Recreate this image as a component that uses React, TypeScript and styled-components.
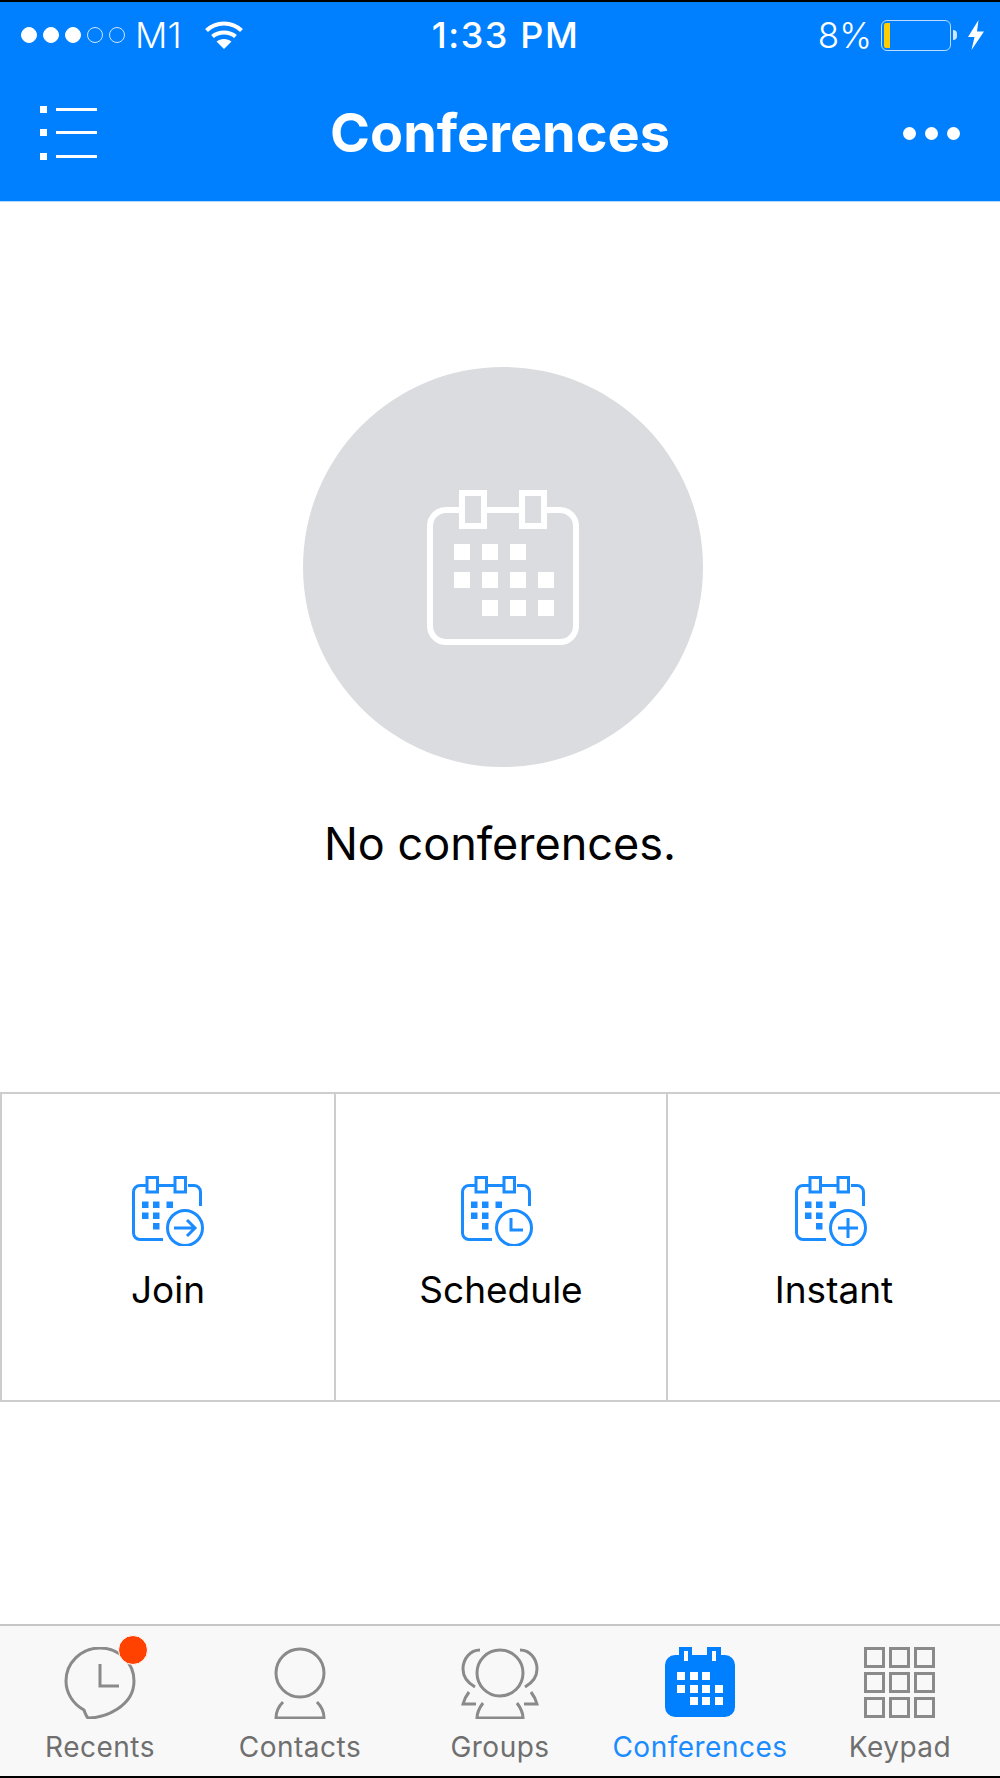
import styled, { createGlobalStyle } from 'styled-components';

const BLUE = '#0080ff';
const ICON_BLUE = '#1a8cff';
const GRAY = '#8a8a8a';

const GlobalStyle = createGlobalStyle`
  html, body { margin: 0; padding: 0; background: #fff; }
  * { box-sizing: border-box; }
  body { font-family: Inter, "Liberation Sans", sans-serif; }
`;

const Page = styled.div`
  width: 1000px;
  height: 1778px;
  display: flex;
  flex-direction: column;
  background: #fff;
  border-top: 2px solid #000;
  border-bottom: 2px solid #000;
`;

const TopBar = styled.header`
  height: 199px;
  flex: none;
  background: ${BLUE};
  color: #fff;
  display: flex;
  flex-direction: column;
  box-shadow: 0 1px 0 #b3d9ff;
`;

const StatusBar = styled.div`
  height: 66px;
  padding: 0 16px 0 21px;
  display: grid;
  grid-template-columns: 1fr auto 1fr;
  align-items: center;
`;

const StatusLeft = styled.div`
  display: flex;
  align-items: center;
`;

const StatusRight = styled.div`
  display: flex;
  align-items: center;
  justify-content: flex-end;
`;

const SignalDots = styled.div`
  display: flex;
  gap: 6px;
`;

const SignalDot = styled.span<{ $on?: boolean }>`
  width: 16px;
  height: 16px;
  border-radius: 50%;
  border: 1px solid ${(p) => (p.$on ? '#fff' : '#cfe6ff')};
  background: ${(p) => (p.$on ? '#fff' : 'transparent')};
`;

const StatusText = styled.span`
  font-size: 35px;
  font-weight: 300;
  line-height: 40px;
`;

const Carrier = styled(StatusText)`
  margin: 0 23px 0 10px;
  font-size: 36px;
`;

const Clock = styled.span`
  margin-left: 6px;
  font-size: 36px;
  font-weight: 500;
  line-height: 40px;
  letter-spacing: 1.6px;
`;

const Battery = styled.div`
  width: 70px;
  height: 31px;
  margin-left: 9px;
  padding: 2px;
  border: 1.5px solid #bcdcff;
  border-radius: 6px;
`;

const BatteryFill = styled.div`
  width: 6px;
  height: 100%;
  background: #ffcc00;
  border-radius: 2px 0 0 2px;
`;

const BatteryNub = styled.div`
  width: 4px;
  height: 10px;
  margin: 0 11px 0 2px;
  background: #cfe6ff;
  border-radius: 0 5px 5px 0;
`;

const NavBar = styled.div`
  flex: 1;
  padding: 0 40px 3px;
  display: grid;
  grid-template-columns: 1fr auto 1fr;
  align-items: center;
`;

const Title = styled.h1`
  margin: 0;
  font-size: 54px;
  font-weight: 700;
  line-height: 60px;
`;

const MoreDots = styled.div`
  justify-self: end;
  display: flex;
  gap: 9px;
`;

const MoreDot = styled.span`
  width: 13px;
  height: 13px;
  border-radius: 50%;
  background: #fff;
`;

const Main = styled.main`
  height: 891px;
  flex: none;
  padding-top: 166px;
  display: flex;
  flex-direction: column;
  align-items: center;
`;

const EmptyCircle = styled.div`
  width: 400px;
  height: 400px;
  margin-left: 6px;
  border-radius: 50%;
  background: #dbdce0;
  display: flex;
  align-items: center;
  justify-content: center;
`;

const EmptyText = styled.p`
  margin: 49px 0 0;
  font-size: 45px;
  line-height: 56px;
  color: #000;
`;

const Actions = styled.section`
  height: 310px;
  flex: none;
  display: grid;
  grid-template-columns: 334px 332px 334px;
  border-top: 2px solid #cdcdcd;
  border-bottom: 2px solid #cdcdcd;
`;

const Action = styled.div`
  display: flex;
  flex-direction: column;
  align-items: center;
  padding-top: 82px;
  border-left: 2px solid #cdcdcd;
`;

const ActionGlyph = styled.div<{ $nudge?: number }>`
  height: 70px;
  margin-right: ${(p) => p.$nudge || 0}px;
`;

const ActionLabel = styled.span`
  margin-top: 22px;
  font-size: 37px;
  line-height: 44px;
  color: #000;
`;

const TabBar = styled.nav`
  margin-top: auto;
  height: 152px;
  flex: none;
  display: grid;
  grid-template-columns: repeat(5, 200px);
  background: #f8f8f8;
  border-top: 2px solid #c6c6c6;
`;

const Tab = styled.div`
  position: relative;
  padding-top: 21px;
  display: flex;
  flex-direction: column;
  align-items: center;
`;

const TabIcon = styled.div`
  position: relative;
  height: 72px;
  display: flex;
`;

const TabLabel = styled.span<{ $active?: boolean }>`
  margin-top: 11px;
  font-size: 28px;
  line-height: 34px;
  letter-spacing: 0.5px;
  color: ${(p) => (p.$active ? ICON_BLUE : '#6f6f6f')};
`;

const Badge = styled.span`
  position: absolute;
  top: -12px;
  right: -12px;
  width: 30px;
  height: 30px;
  border-radius: 50%;
  background: #ff4200;
  border: 1px solid #fff;
`;

const Wifi = () => (
  <svg width="38" height="28" viewBox="0 0 38 28" fill="none" stroke="#fff" strokeWidth="4">
    <path d="M1.5 9.5C11 0 27 0 36.5 9.5" />
    <path d="M7.5 15.5C13.5 10 24.5 10 30.5 15.5" />
    <path d="M19 28L11.5 20.5C15.5 17 22.5 17 26.5 20.5Z" fill="#fff" stroke="none" />
  </svg>
);

const Bolt = () => (
  <svg width="16" height="30" viewBox="0 0 16 30" fill="#fff">
    <path d="M10.5 0L0 17H6.5L3.5 30L16 11.5H9Z" />
  </svg>
);

const MenuIcon = () => (
  <svg width="57" height="54" viewBox="0 0 57 54" fill="#fff">
    <rect x="0" y="0" width="7" height="7" />
    <rect x="0" y="23" width="7" height="7" />
    <rect x="0" y="47" width="7" height="7" />
    <rect x="16" y="2" width="41" height="3" />
    <rect x="16" y="25" width="41" height="3" />
    <rect x="16" y="49" width="41" height="3" />
  </svg>
);

const BIG_CELLS = [
  [27, 54], [55, 54], [83, 54],
  [27, 82], [55, 82], [83, 82], [111, 82],
  [55, 110], [83, 110], [111, 110],
];

const BigCalendar = () => (
  <svg width="152" height="155" viewBox="0 0 152 155" fill="none" stroke="#fff" strokeWidth="6">
    <path d="M32 20H19A16 16 0 0 0 3 36V136A16 16 0 0 0 19 152H133A16 16 0 0 0 149 136V36A16 16 0 0 0 133 20H120M60 20H92" />
    <rect x="35" y="3" width="22" height="33" />
    <rect x="95" y="3" width="22" height="33" />
    {BIG_CELLS.map(([x, y]) => (
      <rect key={`${x}-${y}`} x={x} y={y} width="16" height="16" fill="#fff" stroke="none" />
    ))}
  </svg>
);

const SMALL_CELLS = [
  [10, 25.5], [21, 25.5], [34.5, 25.5],
  [10, 36.5],
  [21, 36.5],
  [21, 47],
];

const ActionIcon = ({ children }: { children: React.ReactNode }) => (
  <svg width="72" height="70" viewBox="0 0 72 70" fill="none" stroke={ICON_BLUE} strokeWidth="3">
    <path d="M14 9.5H8A6.5 6.5 0 0 0 1.5 16V57A6.5 6.5 0 0 0 8 63.500H31M27 9.500H42M56 9.500H62A6.5 6.5 0 0 1 68.500 16V30" />
    <rect x="15" y="1.500" width="10.500" height="14.500" />
    <rect x="43" y="1.500" width="10.500" height="14.500" />
    {SMALL_CELLS.map(([x, y]) => (
      <rect key={`${x}-${y}`} x={x} y={y} width="6.500" height="6.500" fill={ICON_BLUE} stroke="none" />
    ))}
    <circle cx="53" cy="52" r="17.500" />
    {children}
  </svg>
);

const RecentsIcon = () => (
  <svg width="72" height="72" viewBox="0 0 72 72" fill="none" stroke={GRAY} strokeWidth="3">
    <path d="M24 71C40 71 70 60 70 34A34 33 0 0 0 2 34C2 46 9 57 20 63C21 66 22 69 24 71Z" />
    <path d="M36 17V39H55" />
  </svg>
);

const ContactsIcon = () => (
  <svg width="72" height="72" viewBox="0 0 72 72" fill="none" stroke={GRAY} strokeWidth="3">
    <circle cx="36" cy="26" r="24" />
    <path d="M19 55C15 59 12 65 12 71H60C60 65 57 59 53 55" />
  </svg>
);

const GroupsIcon = () => (
  <svg width="80" height="72" viewBox="0 0 80 72" fill="none" stroke={GRAY} strokeWidth="3">
    <circle cx="40" cy="26" r="23" />
    <path d="M20 3C10 3 3 12 3 22C3 30 8 36 15 40" />
    <path d="M60 3C70 3 77 12 77 22C77 30 72 36 65 40" />
    <path d="M9 45C6 49 4 53 3 57H16" />
    <path d="M71 45C74 49 76 53 77 57H64" />
    <path d="M23 56C20 60 17 66 17 71H63C63 66 60 60 57 56" />
  </svg>
);

const CONF_CELLS = [
  [12, 25], [25, 25], [37, 25],
  [12, 38], [25, 38], [37, 38], [50, 38],
  [25, 50], [37, 50], [50, 50],
];

const ConferencesIcon = () => (
  <svg width="70" height="72" viewBox="0 0 70 72" fill={BLUE}>
    <path d="M14 0H27V8H42V0H56V8H60A10 10 0 0 1 70 18V60A10 10 0 0 1 60 70H10A10 10 0 0 1 0 60V18A10 10 0 0 1 10 8H14Z" />
    <rect x="19" y="4" width="4" height="10" fill="#fff" />
    <rect x="47" y="4" width="4" height="10" fill="#fff" />
    {CONF_CELLS.map(([x, y]) => (
      <rect key={`${x}-${y}`} x={x} y={y} width="8" height="8" fill="#fff" />
    ))}
  </svg>
);

const KeypadIcon = () => (
  <svg width="72" height="72" viewBox="0 0 72 72" fill="none" stroke={GRAY} strokeWidth="3">
    {[0, 25, 50].map((y) =>
      [0, 25, 50].map((x) => (
        <rect key={`${x}-${y}`} x={x + 1.500} y={y + 1.500} width="18" height="18" />
      )),
    )}
  </svg>
);

const App = () => {
  return (
    <Page>
      <GlobalStyle />
      <TopBar>
        <StatusBar>
          <StatusLeft>
            <SignalDots>
              <SignalDot $on />
              <SignalDot $on />
              <SignalDot $on />
              <SignalDot />
              <SignalDot />
            </SignalDots>
            <Carrier>M1</Carrier>
            <Wifi />
          </StatusLeft>
          <Clock>1:33 PM</Clock>
          <StatusRight>
            <StatusText>8%</StatusText>
            <Battery>
              <BatteryFill />
            </Battery>
            <BatteryNub />
            <Bolt />
          </StatusRight>
        </StatusBar>
        <NavBar>
          <MenuIcon />
          <Title>Conferences</Title>
          <MoreDots>
            <MoreDot />
            <MoreDot />
            <MoreDot />
          </MoreDots>
        </NavBar>
      </TopBar>

      <Main>
        <EmptyCircle>
          <BigCalendar />
        </EmptyCircle>
        <EmptyText>No conferences.</EmptyText>
      </Main>

      <Actions>
        <Action>
          <ActionGlyph>
            <ActionIcon>
              <path d="M42 52H63M55 44L63 52L55 60" />
            </ActionIcon>
          </ActionGlyph>
          <ActionLabel>Join</ActionLabel>
        </Action>
        <Action>
          <ActionGlyph $nudge={8}>
            <ActionIcon>
              <path d="M50 42V54H62" />
            </ActionIcon>
          </ActionGlyph>
          <ActionLabel>Schedule</ActionLabel>
        </Action>
        <Action>
          <ActionGlyph $nudge={6}>
            <ActionIcon>
              <path d="M53 42V62M43 52H63" />
            </ActionIcon>
          </ActionGlyph>
          <ActionLabel>Instant</ActionLabel>
        </Action>
      </Actions>

      <TabBar>
        <Tab>
          <TabIcon>
            <RecentsIcon />
            <Badge />
          </TabIcon>
          <TabLabel>Recents</TabLabel>
        </Tab>
        <Tab>
          <TabIcon>
            <ContactsIcon />
          </TabIcon>
          <TabLabel>Contacts</TabLabel>
        </Tab>
        <Tab>
          <TabIcon>
            <GroupsIcon />
          </TabIcon>
          <TabLabel>Groups</TabLabel>
        </Tab>
        <Tab>
          <TabIcon>
            <ConferencesIcon />
          </TabIcon>
          <TabLabel $active>Conferences</TabLabel>
        </Tab>
        <Tab>
          <TabIcon>
            <KeypadIcon />
          </TabIcon>
          <TabLabel>Keypad</TabLabel>
        </Tab>
      </TabBar>
    </Page>
  );
};

export default App;
